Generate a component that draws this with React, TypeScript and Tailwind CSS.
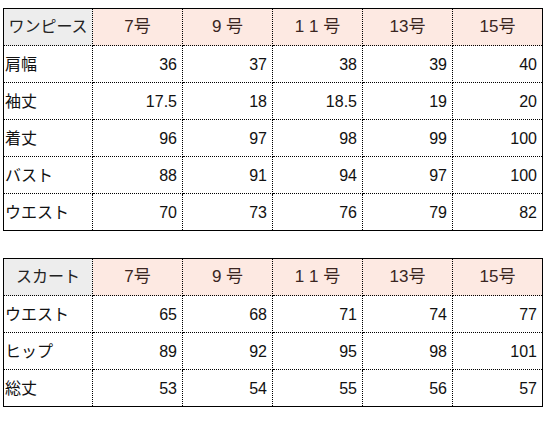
import React from 'react';

// size charts: one-piece and skirt
const sizes = ['7号', '9 号', '1 1 号', '13号', '15号'];

const onePiece: [string, string[]][] = [
  ['肩幅', ['36', '37', '38', '39', '40']],
  ['袖丈', ['17.5', '18', '18.5', '19', '20']],
  ['着丈', ['96', '97', '98', '99', '100']],
  ['バスト', ['88', '91', '94', '97', '100']],
  ['ウエスト', ['70', '73', '76', '79', '82']],
];

const skirt: [string, string[]][] = [
  ['ウエスト', ['65', '68', '71', '74', '77']],
  ['ヒップ', ['89', '92', '95', '98', '101']],
  ['総丈', ['53', '54', '55', '56', '57']],
];

const font = { fontFamily: '"Liberation Sans", "Noto Sans CJK JP", sans-serif' };

function SizeTable({ title, rows }: { title: string; rows: [string, string[]][] }) {
  return (
    <table className="border-collapse table-fixed border border-black w-[539px]">
      <colgroup>
        <col className="w-[89px]" />
        {sizes.map((s) => (
          <col key={s} className="w-[90px]" />
        ))}
      </colgroup>
      <thead>
        <tr className="h-[37px]">
          <th className="bg-[#ededed] border border-dotted border-black text-[16px] font-normal text-[#222] text-center p-0">
            {title}
          </th>
          {sizes.map((s) => (
            <th
              key={s}
              className="bg-[#fde9e2] border border-dotted border-black text-[17px] font-normal text-[#3a2622] text-center p-0 whitespace-pre"
            >
              {s}
            </th>
          ))}
        </tr>
      </thead>
      <tbody>
        {rows.map(([label, values]) => (
          <tr key={label} className="h-[37px]">
            <td className="border border-dotted border-black text-[16px] text-[#111] text-left pl-px pt-[2px]">
              {label}
            </td>
            {values.map((v, i) => (
              <td key={i} className="border border-dotted border-black text-[16px] text-[#111] text-right pr-[5px] pt-[2px]">
                {v}
              </td>
            ))}
          </tr>
        ))}
      </tbody>
    </table>
  );
}

export default function App() {
  return (
    <div className="w-[545px] h-[432px] bg-white pl-[3px] pt-[8px] flex flex-col gap-[27px]" style={font}>
      <SizeTable title="ワンピース" rows={onePiece} />
      <SizeTable title="スカート" rows={skirt} />
    </div>
  );
}
